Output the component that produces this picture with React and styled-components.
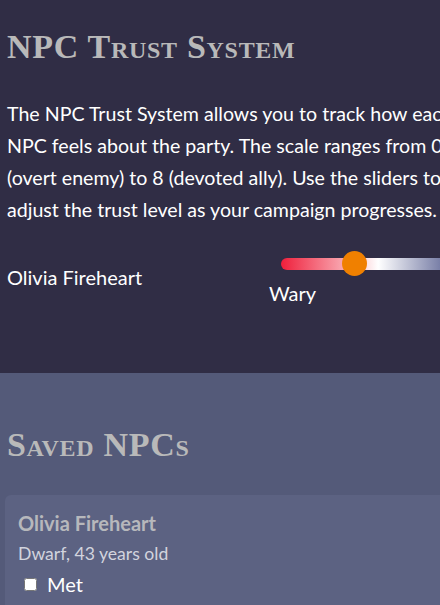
import React, { useState } from 'react';
import styled, { createGlobalStyle } from 'styled-components';

const GlobalStyle = createGlobalStyle`
    html, body {
        margin: 0;
        padding: 0;
        overflow: hidden;
        background-color: #545a79;
    }
`;

const Page = styled.div`
    width: 480px;
    font-family: Lato, "Open Sans", sans-serif;
    color: #ffffff;
`;

const TopSection = styled.section`
    background-color: #302d45;
    padding: 25px 7px 0 7px;
    height: 348px;
`;

const BottomSection = styled.section`
    background-color: #545a79;
    padding: 50px 0 0 5px;
    min-height: 300px;
`;

const Title = styled.h2`
    font-family: "Liberation Serif", "DejaVu Serif", serif;
    font-variant: small-caps;
    font-weight: bold;
    font-size: 34px;
    letter-spacing: 0.7px;
    line-height: 44px;
    color: #b9b9b9;
    margin: 0 0 ${(p) => p.$gap}px ${(p) => p.$indent}px;
`;

const Intro = styled.p`
    width: 458px;
    font-size: 19.6px;
    line-height: 32px;
    margin: 0 0 25px 0;
`;

const NpcRow = styled.div`
    display: grid;
    grid-template-columns: 262px 1fr;
    align-items: start;
`;

const NpcName = styled.div`
    font-size: 20px;
    line-height: 24px;
    padding-top: 14px;
`;

const SliderBox = styled.div`
    display: flex;
    flex-direction: column;
    align-items: flex-start;
`;

const Range = styled.input`
    -webkit-appearance: none;
    appearance: none;
    width: 187px;
    height: 25px;
    margin: 0 0 0 12px;
    background: transparent;

    &::-webkit-slider-runnable-track {
        height: 12px;
        border-radius: 6px;
        background: linear-gradient(to right, #ef1f3b 0%, #f9b2ba 36%, #ffffff 52%, #3d4680 100%);
    }

    &::-webkit-slider-thumb {
        -webkit-appearance: none;
        width: 25px;
        height: 25px;
        border-radius: 50%;
        background: #f08000;
        border: none;
        margin-top: -6.5px;
        cursor: pointer;
    }
`;

const TrustLabel = styled.span`
    font-size: 20px;
    line-height: 24px;
    margin-top: 5px;
`;

const Card = styled.div`
    background-color: #5c6282;
    border-radius: 6px;
    padding: 16px 13px 16px 13px;
`;

const CardName = styled.div`
    font-size: 20px;
    font-weight: bold;
    color: #b7b8bc;
    line-height: 24px;
`;

const CardInfo = styled.div`
    font-size: 17.6px;
    color: #d2d4de;
    line-height: 22px;
    margin-top: 8px;
`;

const CheckRow = styled.label`
    display: flex;
    align-items: center;
    gap: 10px;
    font-size: 20px;
    line-height: 24px;
    margin-top: 7px;
    padding-left: 6px;
`;

const Check = styled.input`
    width: 13px;
    height: 13px;
    margin: 0;
`;

const trustNames = ['Overt Enemy', 'Hostile', 'Suspicious', 'Wary', 'Neutral', 'Friendly', 'Trusting', 'Loyal', 'Devoted Ally'];

export default function App() {
    const [trust, setTrust] = useState(3);
    const [met, setMet] = useState(false);

    return (
        <>
            <GlobalStyle />
            <Page>
                <TopSection>
                    <Title $gap={29} $indent={0}>NPC Trust System</Title>
                    <Intro>
                        The NPC Trust System allows you to track how each NPC feels about the party. The scale ranges from 0 (overt enemy) to 8 (devoted ally). Use the sliders to adjust the trust level as your campaign progresses.
                    </Intro>
                    <NpcRow>
                        <NpcName>Olivia Fireheart</NpcName>
                        <SliderBox>
                            <Range
                                type="range"
                                min={0}
                                max={8}
                                value={trust}
                                onChange={(e) => setTrust(Number(e.target.value))}
                            />
                            <TrustLabel>{trustNames[trust]}</TrustLabel>
                        </SliderBox>
                    </NpcRow>
                </TopSection>
                <BottomSection>
                    <Title $gap={28} $indent={2}>Saved NPCs</Title>
                    <Card>
                        <CardName>Olivia Fireheart</CardName>
                        <CardInfo>Dwarf, 43 years old</CardInfo>
                        <CheckRow>
                            <Check type="checkbox" checked={met} onChange={(e) => setMet(e.target.checked)} />
                            Met
                        </CheckRow>
                    </Card>
                </BottomSection>
            </Page>
        </>
    );
}
